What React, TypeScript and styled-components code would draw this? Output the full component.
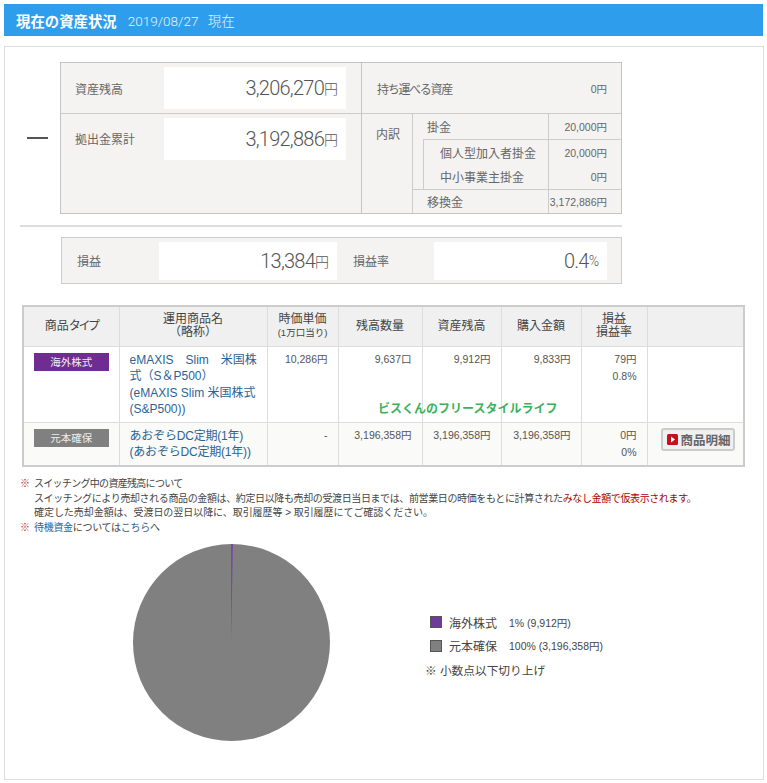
import React from "react";
import styled, { createGlobalStyle } from "styled-components";

const Global = createGlobalStyle`
  html, body { margin: 0; padding: 0; background: #fff; }
  body { font-family: "Liberation Sans", "Noto Sans CJK JP", sans-serif; color: #555; }
  * { box-sizing: border-box; }
`;
const Page = styled.div`
  width: 767px;
  height: 783px;
  padding: 4px 4px 3px 4px;
  overflow: hidden;
`;
const Header = styled.header`
  height: 32px;
  background: #2e9eec;
  color: #fff;
  display: flex;
  align-items: center;
  padding-left: 12px;
  gap: 11px;
`;
const HeaderTitle = styled.h1`
  margin: 0;
  font-size: 14.4px;
  font-weight: 700;
`;
const HeaderDate = styled.span`
  font-family: Roboto, "Noto Sans CJK JP", sans-serif;
  font-weight: 300;
  font-size: 13.5px;
  color: #e4f2fd;
  word-spacing: 6px;
`;
const Panel = styled.main`
  margin-top: 10px;
  width: 760px;
  height: 734px;
  border: 1px solid #ddd;
  padding: 15px 0 0 15px;
`;
const Summary = styled.section`
  display: flex;
  align-items: center;
`;
const Minus = styled.div`
  width: 21px;
  height: 2px;
  background: #555;
  margin: 0 12px 0 7px;
`;
const BalanceGrid = styled.div`
  width: 562px;
  height: 152px;
  display: grid;
  grid-template-columns: 301px 1fr;
  grid-template-rows: 51px 1fr;
  background: #f4f3f2;
  border: 1px solid #c4c4c4;
`;
const BalanceCell = styled.div<{ $top?: boolean }>`
  display: flex;
  align-items: ${(p) => (p.$top ? "flex-start" : "center")};
  padding: ${(p) => (p.$top ? "4px" : "0")} 15px 0 14px;
  border-bottom: ${(p) => (p.$top ? "0" : "1px solid #ccc")};
  border-right: 1px solid #c4c4c4;
`;
const Label = styled.div<{ $w: number; $drop?: number; $gap?: number }>`
  width: ${(p) => p.$w}px;
  flex: none;
  margin-left: ${(p) => p.$gap ?? 0}px;
  padding-top: ${(p) => p.$drop ?? 0}px;
  font-size: 12px;
  color: #666;
`;
const ValueBox = styled.div<{ $w: number; $h: number }>`
  width: ${(p) => p.$w}px;
  height: ${(p) => p.$h}px;
  flex: none;
  background: #fff;
  display: flex;
  align-items: center;
  justify-content: flex-end;
  padding-right: 8px;
  font-family: Roboto, "Noto Sans CJK JP", sans-serif;
  font-weight: 300;
  font-size: 20px;
  color: #555;
  letter-spacing: -0.75px;
`;
const Unit = styled.span`
  font-size: 14px;
  letter-spacing: 0;
`;
const PortableCell = styled.div`
  display: flex;
  align-items: center;
  justify-content: space-between;
  padding: 0 14px 0 15px;
  border-bottom: 1px solid #ccc;
  font-size: 12px;
  color: #666;
`;
const PortableName = styled.span`
  letter-spacing: -1.3px;
`;
const PortableValue = styled.span`
  font-size: 10.5px;
`;
const Breakdown = styled.div`
  display: flex;
`;
const BreakdownTitle = styled.div`
  width: 51px;
  flex: none;
  padding: 11px 0 0 14px;
  font-size: 12px;
  color: #666;
  border-right: 1px solid #ccc;
`;
const BreakdownRows = styled.div`
  flex: 1;
  display: flex;
  flex-direction: column;
`;
const BreakRow = styled.div<{ $h: number; $line?: boolean }>`
  display: flex;
  height: ${(p) => p.$h}px;
  align-items: stretch;
  font-size: 12px;
  color: #666;
  border-top: ${(p) => (p.$line ? "1px solid #ccc" : "0")};
`;
const BreakGroup = styled.div`
  margin-left: 10px;
  border-top: 1px solid #ccc;
  border-left: 1px solid #ccc;
`;
const BreakName = styled.div<{ $w: number; $pad: number }>`
  width: ${(p) => p.$w}px;
  flex: none;
  display: flex;
  align-items: center;
  padding-left: ${(p) => p.$pad}px;
  border-right: 1px solid #ccc;
`;
const BreakValue = styled.div`
  flex: 1;
  display: flex;
  align-items: center;
  justify-content: flex-end;
  padding-right: 14px;
  font-size: 10.5px;
`;
const Divider = styled.hr`
  width: 602px;
  height: 2px;
  margin: 11px 0 10px 0;
  border: 0;
  background: #ddd;
`;
const ProfitBar = styled.section`
  margin-left: 41px;
  width: 561px;
  height: 47px;
  border: 1px solid #ccc;
  background: #f4f3f2;
  display: flex;
  align-items: center;
  padding-left: 15px;
`;
const TableWrap = styled.div`
  position: relative;
  margin: 21px 0 0 2px;
  width: 723px;
  border: 2px solid #ccc;
`;
const Table = styled.table`
  width: 719px;
  border-collapse: collapse;
  table-layout: fixed;
  font-size: 12px;
  color: #555;
`;
const Th = styled.th<{ $w: number }>`
  width: ${(p) => p.$w}px;
  height: 39px;
  padding: 0;
  background: #f0f0f0;
  font-weight: 400;
  font-size: 12px;
  line-height: 13px;
  color: #444;
  border-left: 1px solid #ddd;
  &:first-child { border-left: 0; }
`;
const Kana = styled.span`
  letter-spacing: -2.4px;
`;
const SmallTh = styled.small`
  font-size: 9.5px;
`;
const Row = styled.tr<{ $height: number; $alt?: boolean }>`
  height: ${(p) => p.$height}px;
  background: ${(p) => (p.$alt ? "#fafaf8" : "#fff")};
  border-top: 1px solid #ddd;
`;
const Td = styled.td<{ $num?: boolean; $center?: boolean; $bare?: boolean }>`
  padding: ${(p) =>
    p.$bare ? "0" : p.$center ? "6px 0 0" : p.$num ? "4px 10px 0 0" : "5px 0 0 10px"};
  vertical-align: top;
  text-align: ${(p) => (p.$center ? "center" : p.$num ? "right" : "left")};
  font-size: ${(p) => (p.$num ? "10.5px" : "12px")};
  line-height: 17px;
  border-left: 1px solid #ddd;
  &:first-child { border-left: 0; }
`;
const Badge = styled.div<{ $color: string }>`
  width: 75px;
  height: 18px;
  margin: 0 auto;
  background: ${(p) => p.$color};
  color: #eee;
  font-size: 10.5px;
  line-height: 18px;
  text-align: center;
`;
const Fund = styled.a<{ $tight?: boolean }>`
  color: #2a6496;
  font-size: 12px;
  line-height: 16.5px;
  letter-spacing: ${(p) => (p.$tight ? "-0.2px" : "0")};
  display: block;
  white-space: nowrap;
`;
const DetailButton = styled.button`
  display: flex;
  align-items: center;
  gap: 3px;
  width: 74px;
  height: 23px;
  margin: 5px 0 0 13px;
  padding: 0 0 0 4px;
  background: #f0f0f0;
  border: 2px solid #ccc;
  border-radius: 3px;
  color: #666;
  font-family: inherit;
  font-size: 12.5px;
  font-weight: 700;
  white-space: nowrap;
`;
const Watermark = styled.div`
  position: absolute;
  left: 354px;
  top: 92px;
  color: #3ab25c;
  font-size: 12px;
  font-weight: 700;
  white-space: nowrap;
`;
const Notes = styled.div`
  margin: 10px 0 0 0;
  font-size: 10px;
  line-height: 14.7px;
  color: #444;
  white-space: nowrap;
`;
const NoteLine = styled.div<{ $indent?: boolean; $spacing: number }>`
  padding-left: ${(p) => (p.$indent ? 14 : 0)}px;
  letter-spacing: ${(p) => p.$spacing}px;
`;
const Mark = styled.span`
  color: #b03030;
  display: inline-block;
  width: 14px;
  letter-spacing: 0;
`;
const Red = styled.span`
  color: #a80000;
`;
const NoteLink = styled.a`
  color: #2a6496;
`;
const Chart = styled.section`
  display: flex;
  align-items: flex-start;
  margin: 8px 0 0 113px;
`;
const Legend = styled.div`
  margin: 70px 0 0 95px;
  display: flex;
  flex-direction: column;
  gap: 7px;
  color: #444;
`;
const LegendRow = styled.div<{ $large?: boolean }>`
  display: flex;
  align-items: center;
  height: 16.5px;
  white-space: nowrap;
  font-size: ${(p) => (p.$large ? 11.7 : 10.5)}px;
`;
const Swatch = styled.span<{ $color: string }>`
  width: 12px;
  height: 12px;
  margin: 0 7px 0 5px;
  background: ${(p) => p.$color};
  border: 1px solid #555;
`;
const LegendName = styled.span`
  width: 60px;
  font-size: 12px;
`;

export default function App() {
  return (
    <Page>
      <Global />
      <Header>
        <HeaderTitle>現在の資産状況</HeaderTitle>
        <HeaderDate>2019/08/27 現在</HeaderDate>
      </Header>
      <Panel>
        <Summary>
          <Minus />
          <BalanceGrid>
            <BalanceCell>
              <Label $w={89}>資産残高</Label>
              <ValueBox $w={182} $h={42}>3,206,270<Unit>円</Unit></ValueBox>
            </BalanceCell>
            <PortableCell>
              <PortableName>持ち運べる資産</PortableName>
              <PortableValue>0円</PortableValue>
            </PortableCell>
            <BalanceCell $top>
              <Label $w={89} $drop={12}>拠出金累計</Label>
              <ValueBox $w={182} $h={42}>3,192,886<Unit>円</Unit></ValueBox>
            </BalanceCell>
            <Breakdown>
              <BreakdownTitle>内訳</BreakdownTitle>
              <BreakdownRows>
                <BreakRow $h={25}>
                  <BreakName $w={136} $pad={14}>掛金</BreakName>
                  <BreakValue>20,000円</BreakValue>
                </BreakRow>
                <BreakGroup>
                  <BreakRow $h={24.5}>
                    <BreakName $w={125} $pad={16}>個人型加入者掛金</BreakName>
                    <BreakValue>20,000円</BreakValue>
                  </BreakRow>
                  <BreakRow $h={24.5}>
                    <BreakName $w={125} $pad={16}>中小事業主掛金</BreakName>
                    <BreakValue>0円</BreakValue>
                  </BreakRow>
                </BreakGroup>
                <BreakRow $h={24} $line>
                  <BreakName $w={136} $pad={14}>移換金</BreakName>
                  <BreakValue>3,172,886円</BreakValue>
                </BreakRow>
              </BreakdownRows>
            </Breakdown>
          </BalanceGrid>
        </Summary>
        <Divider />
        <ProfitBar>
          <Label $w={82}>損益</Label>
          <ValueBox $w={178} $h={38}>13,384<Unit>円</Unit></ValueBox>
          <Label $w={81} $gap={16}>損益率</Label>
          <ValueBox $w={173} $h={38}>0.4<Unit>%</Unit></ValueBox>
        </ProfitBar>
        <TableWrap>
          <Table>
            <thead>
              <tr>
                <Th $w={95}>商品<Kana>タイプ</Kana></Th>
                <Th $w={148}>運用商品名<br />（略称）</Th>
                <Th $w={71}>時価単価<br /><SmallTh>(1万口当り)</SmallTh></Th>
                <Th $w={84}>残高数量</Th>
                <Th $w={79}>資産残高</Th>
                <Th $w={80}>購入金額</Th>
                <Th $w={66}>損益<br />損益率</Th>
                <Th $w={96}></Th>
              </tr>
            </thead>
            <tbody>
              <Row $height={76}>
                <Td $center><Badge $color="#6f2c91">海外株式</Badge></Td>
                <Td><Fund>eMAXIS　Slim　米国株<br />式（S＆P500）<br />(eMAXIS Slim 米国株式<br />(S&amp;P500))</Fund></Td>
                <Td $num>10,286円</Td>
                <Td $num>9,637口</Td>
                <Td $num>9,912円</Td>
                <Td $num>9,833円</Td>
                <Td $num>79円<br />0.8%</Td>
                <Td />
              </Row>
              <Row $height={43} $alt>
                <Td $center><Badge $color="#808080">元本確保</Badge></Td>
                <Td><Fund $tight>あおぞらDC定期(1年)<br />(あおぞらDC定期(1年))</Fund></Td>
                <Td $num>-</Td>
                <Td $num>3,196,358円</Td>
                <Td $num>3,196,358円</Td>
                <Td $num>3,196,358円</Td>
                <Td $num>0円<br />0%</Td>
                <Td $bare>
                  <DetailButton>
                    <svg width="11" height="11" viewBox="0 0 11 11">
                      <rect width="11" height="11" rx="1.5" fill="#c8101a" />
                      <path d="M4 2.5 L8 5.5 L4 8.5 Z" fill="#fff" />
                    </svg>
                    商品明細
                  </DetailButton>
                </Td>
              </Row>
            </tbody>
          </Table>
          <Watermark>ビスくんのフリースタイルライフ</Watermark>
        </TableWrap>
        <Notes>
          <NoteLine $spacing={-0.7}><Mark>※</Mark>スイッチング中の資産残高について</NoteLine>
          <NoteLine $indent $spacing={-0.38}>スイッチングにより売却される商品の金額は、約定日以降も売却の受渡日当日までは、前営業日の時価をもとに計算された<Red>みなし金額で仮表示されます。</Red></NoteLine>
          <NoteLine $indent $spacing={-0.05}>確定した売却金額は、受渡日の翌日以降に、取引履歴等 &gt; 取引履歴にてご確認ください。</NoteLine>
          <NoteLine $spacing={-0.3}><Mark>※</Mark><NoteLink>待機資金</NoteLink>については<NoteLink>こちら</NoteLink>へ</NoteLine>
        </Notes>
        <Chart>
          <svg width="197" height="197" viewBox="0 0 197 197">
            <circle cx="98.5" cy="98.5" r="98.5" fill="#808080" />
            <path d="M98 98.5 L98 0 L100 0 Z" fill="#7a4a9e" />
          </svg>
          <Legend>
            <LegendRow><Swatch $color="#6f3a9e" /><LegendName>海外株式</LegendName>1% (9,912円)</LegendRow>
            <LegendRow><Swatch $color="#808080" /><LegendName>元本確保</LegendName>100% (3,196,358円)</LegendRow>
            <LegendRow $large>※ 小数点以下切り上げ</LegendRow>
          </Legend>
        </Chart>
      </Panel>
    </Page>
  );
}
